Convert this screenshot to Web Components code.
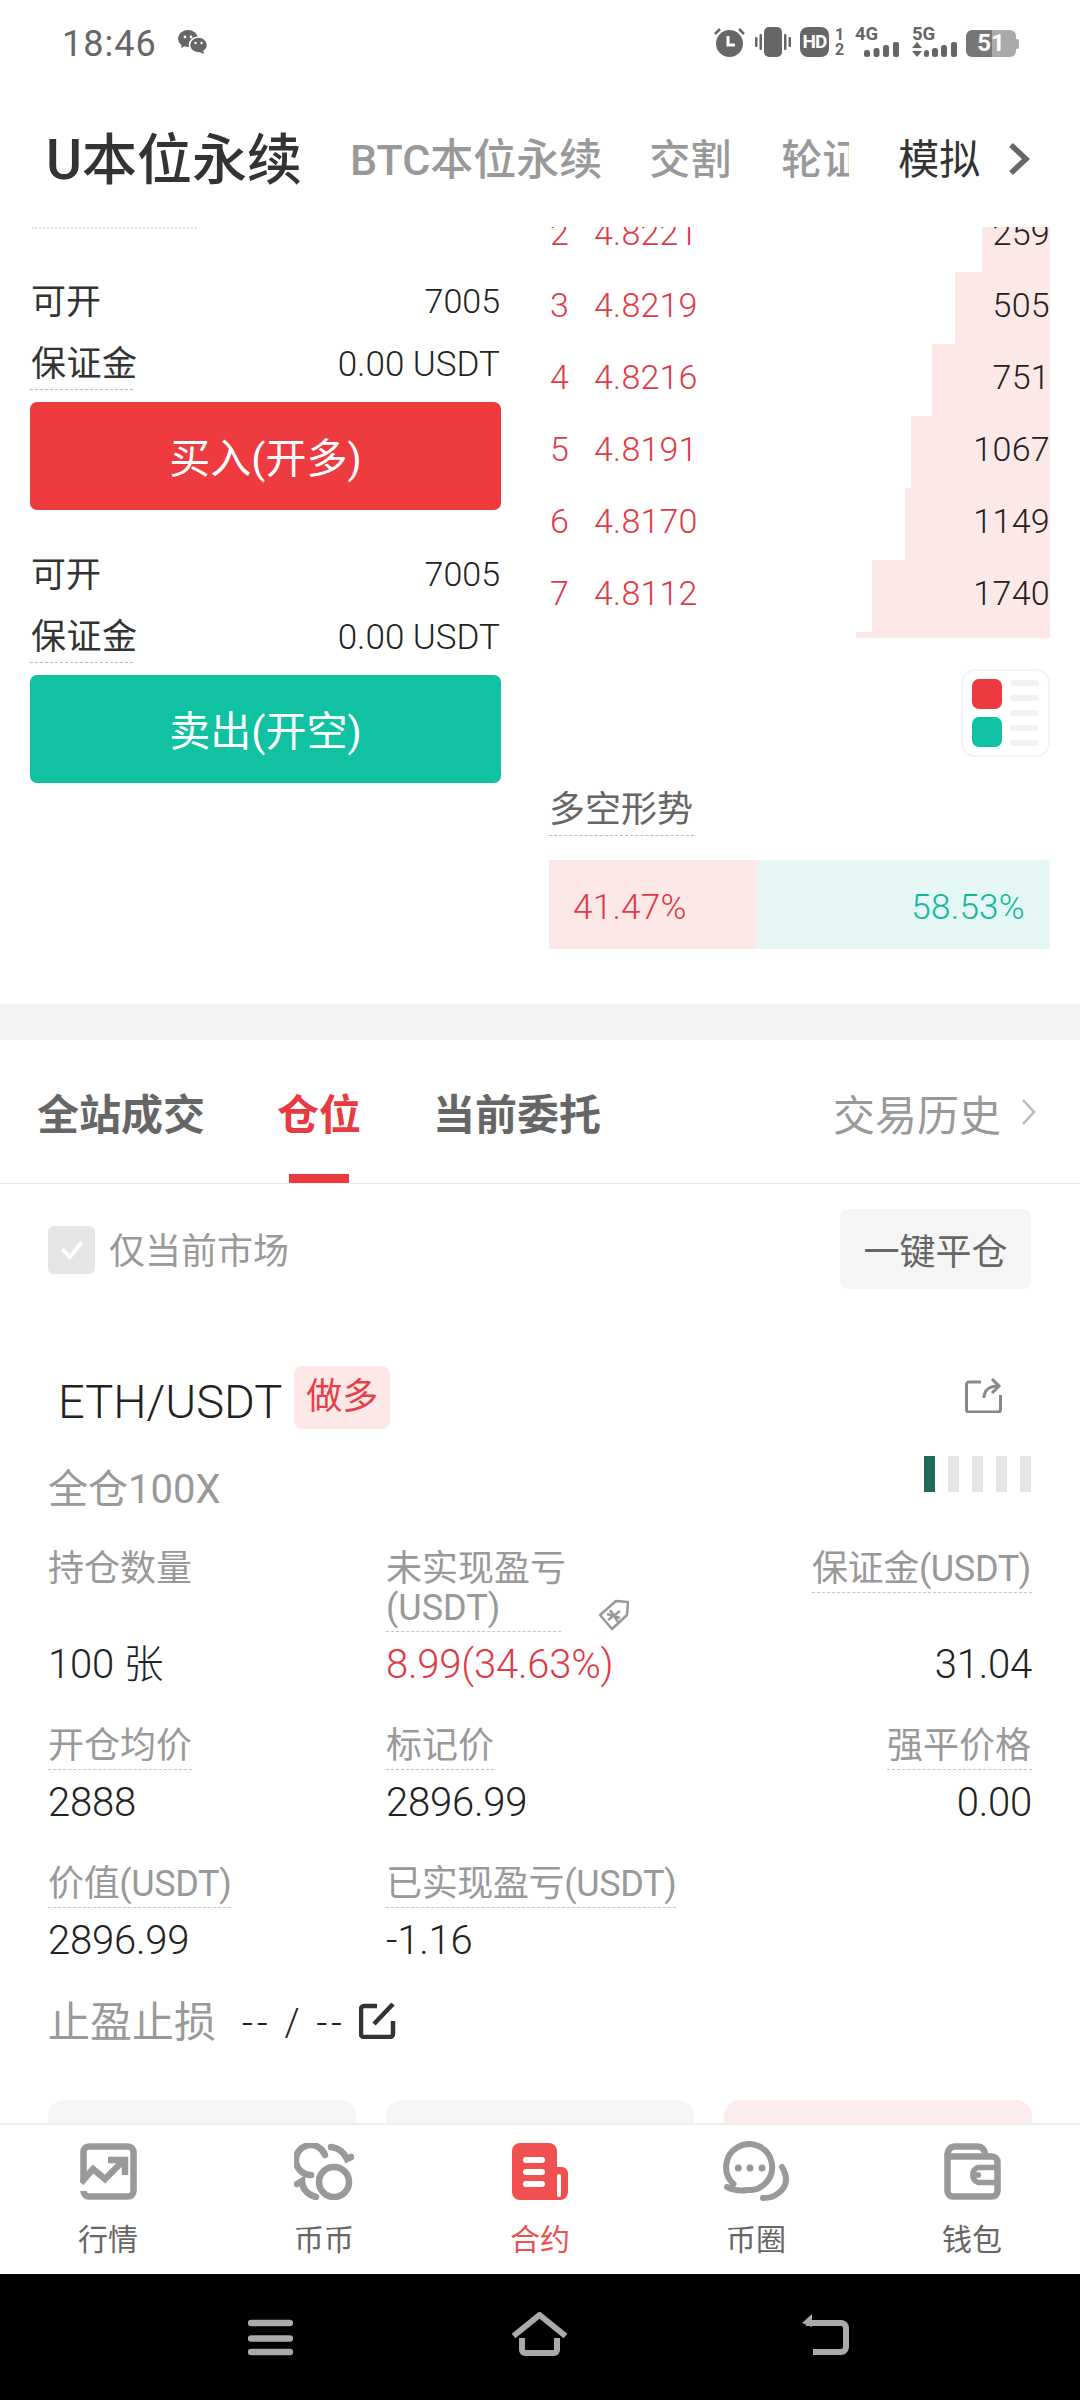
<!DOCTYPE html>
<html lang="zh-CN"><head><meta charset="utf-8"><title>合约</title>
<style>
html,body{margin:0;padding:0;background:#fff}
body{width:1080px;height:2400px;overflow:hidden;font-family:Roboto,"Noto Sans CJK SC",sans-serif;color:#333;display:flex;flex-direction:column}
</style></head><body>
<status-bar></status-bar>
<market-tabs></market-tabs>
<scroll-view>
  <trade-section>
    <trade-form slot="left" kind="buy" title-text="买入(开多)"></trade-form>
    <trade-form slot="left" kind="sell" title-text="卖出(开空)"></trade-form>
    <order-row slot="right" n="2" p="4.8221" q="259" w="68"></order-row>
    <order-row slot="right" n="3" p="4.8219" q="505" w="95"></order-row>
    <order-row slot="right" n="4" p="4.8216" q="751" w="118"></order-row>
    <order-row slot="right" n="5" p="4.8191" q="1067" w="139"></order-row>
    <order-row slot="right" n="6" p="4.8170" q="1149" w="145"></order-row>
    <order-row slot="right" n="7" p="4.8112" q="1740" w="178"></order-row>
  </trade-section>
  <section-gap></section-gap>
  <position-tabs></position-tabs>
  <filter-row></filter-row>
  <position-head></position-head>
  <stat-grid>
    <stat-cell label="持仓数量" plain>100 张</stat-cell>
    <stat-cell label="未实现盈亏|(USDT)" tag red>8.99(34.63%)</stat-cell>
    <stat-cell label="保证金(USDT)" end>31.04</stat-cell>
    <stat-cell label="开仓均价">2888</stat-cell>
    <stat-cell label="标记价">2896.99</stat-cell>
    <stat-cell label="强平价格" end>0.00</stat-cell>
    <stat-cell label="价值(USDT)">2896.99</stat-cell>
    <stat-cell label="已实现盈亏(USDT)">-1.16</stat-cell>
  </stat-grid>
  <stop-row></stop-row>
  <action-row></action-row>
</scroll-view>
<bottom-nav></bottom-nav>
<system-nav></system-nav>
<script>
const def=(name,html)=>customElements.define(name,class extends HTMLElement{constructor(){super();this.attachShadow({mode:'open'}).innerHTML=html}});

def('status-bar',`<style>
:host{display:flex;flex:none;height:84px;box-sizing:border-box;padding:0 60px 0 62px;align-items:center;color:#666}
.t{font-size:36px;letter-spacing:1px;line-height:40px;margin-top:4px}
.w{margin-left:21px;margin-top:0}
.r{margin-left:auto;display:flex;align-items:flex-start;margin-top:0;font-weight:700;height:30px}
svg{display:block}
.hd{width:29px;height:30px;border-radius:8px;background:#666;color:#fff;font-size:19px;line-height:30px;text-align:center;letter-spacing:-1px;margin-left:9px}
.d{display:flex;flex-direction:column;width:9px;margin-left:6px;font-size:16px;line-height:15px;text-align:center}
.net{display:flex;flex-direction:column;height:30px;margin-left:11px;width:44px;font-size:18.500px;line-height:14px}
.net svg{margin-top:1px}
.bat{margin-left:9px;width:54px;height:27px;margin-top:3px;display:flex;align-items:center}
.body{width:50px;height:27px;border-radius:6px;background:linear-gradient(90deg,#777 26px,#aaa 26px);color:#fff;font-size:24px;line-height:27px;text-align:center}
.nub{width:3px;height:10px;background:#aaa;border-radius:0 2px 2px 0}
</style>
<span class="t">18:46</span>
<svg class="w" width="30" height="24" viewBox="0 0 30 24" fill="#666"><ellipse cx="10" cy="8.500" rx="10" ry="8.500"/><path d="M4 13l-1 5 6-3z"/><ellipse cx="20.500" cy="15" rx="9" ry="8" stroke="#fff" stroke-width="1.500"/><path d="M25 20l1 4-5-2z"/><circle cx="7" cy="7" r="1.400" fill="#fff"/><circle cx="13" cy="7" r="1.400" fill="#fff"/><circle cx="17.500" cy="13" r="1.200" fill="#fff"/><circle cx="23.500" cy="13" r="1.200" fill="#fff"/></svg>
<div class="r">
<svg width="31" height="30" viewBox="0 0 31 30"><circle cx="15.500" cy="16.500" r="13.500" fill="#666"/><path d="M14 9v9h7" fill="none" stroke="#fff" stroke-width="3"/><path d="M1 7l5-5M30 7l-5-5" stroke="#666" stroke-width="2.500"/></svg>
<svg style="margin-left:10px" width="36" height="30" viewBox="0 0 36 30" fill="#666"><rect x="9" width="18" height="30" rx="5"/><rect y="10" width="2.500" height="10" rx="1"/><rect x="4.500" y="7" width="2.500" height="16" rx="1"/><rect x="29" y="7" width="2.500" height="16" rx="1"/><rect x="33.500" y="10" width="2.500" height="10" rx="1"/></svg>
<span class="hd">HD</span><span class="d"><span>1</span><span>2</span></span>
<span class="net">4G<svg width="35" height="15" viewBox="0 0 35 15" style="margin-left:9px" fill="#666"><rect y="8" width="6" height="7" rx="2.500"/><rect x="9.500" y="6" width="6" height="9" rx="2.500"/><rect x="19" y="3" width="6" height="12" rx="2.500"/><rect x="29" width="6" height="15" rx="2"/></svg></span>
<span class="net" style="margin-left:13px;width:45px">5G<svg width="45" height="15" viewBox="0 0 45 15" fill="#666"><path d="M5 0l5 6H0zM5 15l5-6H0z"/><rect x="12" y="8" width="5" height="7" rx="2.500"/><rect x="20" y="6" width="6" height="9" rx="2.500"/><rect x="29" y="3" width="6" height="12" rx="2.500"/><rect x="39" width="6" height="15" rx="2"/></svg></span>
<span class="bat"><span class="body">51</span><span class="nub"></span></span>
</div>`);

def('market-tabs',`<style>
:host{display:flex;flex:none;height:143px;box-sizing:border-box;align-items:center;padding:8px 0 0 46px;white-space:nowrap;color:#999}
.a{font-size:55px;font-weight:500;color:#333;margin-right:48px;line-height:60px}
.g{font-size:43px;font-weight:500;line-height:60px}
.k{margin-left:47px;font-size:41px}
.clip{width:68px;overflow:hidden;margin-left:50px;font-size:41px}
.d{font-size:41px;color:#333;margin-left:49px;line-height:60px}
svg{margin-left:28px;margin-top:-2px}
</style>
<span class="a">U本位永续</span><span class="g">BTC本位永续</span><span class="g k">交割</span><span class="g clip">轮证</span><span class="d">模拟</span>
<svg width="22" height="32" viewBox="0 0 22 32" fill="none" stroke="#666" stroke-width="5.500"><path d="M3 2l15 14L3 30"/></svg>`);

def('scroll-view',`<style>:host{display:block;flex:1;min-height:0;overflow:hidden}</style><slot></slot>`);

def('trade-section',`<style>
:host{display:grid;grid-template-columns:471px 501px;column-gap:48px;box-sizing:border-box;height:777px;padding-left:30px;overflow:hidden}
.frag{height:3px;width:165px;border-top:2px dotted #e4e4e4;margin-left:2px;margin-bottom:45px}
.r{margin-top:-27px}
.stub{height:6px;background:linear-gradient(to left,#fde8e8 194px,transparent 194px)}
.sw{margin:31px 0 0 auto;width:89px;height:88px;box-sizing:border-box;border:2px solid #f4f4f4;border-radius:14px;padding:8px 9px;display:grid;grid-template-columns:30px 29px;column-gap:8px;align-content:space-between}
.bl{display:flex;flex-direction:column;justify-content:space-between;height:68px}
.bl i{display:block;height:30px;border-radius:7px}
.ln{display:flex;flex-direction:column;justify-content:space-between;height:66px;margin-top:1px}
.ln i{display:block;height:6px;border-radius:3px;background:#f2f2f2}
.h{display:inline-block;margin-top:27px;font-size:36px;line-height:52px;height:51px;color:#666;border-bottom:1px dashed #bbb;padding:0 1px 0 0}
.bar{display:flex;justify-content:space-between;align-items:center;height:89px;margin-top:24px;font-size:35px;font-weight:300;line-height:95px}
.bar span{box-sizing:border-box;height:89px}
.x{width:208px;background:#fde8e8;color:#e03a44;padding-left:24px;letter-spacing:.3px}
.y{flex:1;background:#e5f7f4;color:#10b89a;padding-right:25px;text-align:right;letter-spacing:.3px}
</style>
<div class="l"><div class="frag"></div><slot name="left"></slot></div>
<div class="r"><slot name="right"></slot><div class="stub"></div>
<div class="sw"><div class="bl"><i style="background:#ee3b40"></i><i style="background:#10c2a2"></i></div><div class="ln"><i></i><i></i><i></i><i></i><i></i></div></div>
<div class="h">多空形势</div>
<div class="bar"><span class="x">41.47%</span><span class="y">58.53%</span></div></div>`);

customElements.define('trade-form',class extends HTMLElement{constructor(){super();
const buy=this.getAttribute('kind')==='buy';
this.attachShadow({mode:'open'}).innerHTML=`<style>
:host{display:block;margin-top:${buy?'0':'40px'}}
.row{display:flex;justify-content:space-between;align-items:center;font-size:35px}
.a{height:48px}
.a .c{margin:0 0 6px 1px}
.b{height:53px;margin-top:12px;align-items:flex-start}
.b span{line-height:56px}
.u{border-bottom:1px dashed #bbb;width:103px;white-space:nowrap;height:52px;letter-spacing:.5px;text-indent:1px}
.n{margin-right:1px;font-weight:300;color:#222}
.s{font-size:34px}
button{display:block;width:471px;height:108px;margin-top:12px;border:0;padding:6px 0 0;border-radius:7px;background:${buy?'#ee3b40':'#10c2a2'};color:#fff;font:inherit;font-size:41px;line-height:100px}
</style>
<div class="row a"><span class="c">可开</span><span class="n s">7005</span></div>
<div class="row b"><span class="u">保证金</span><span class="n">0.00 USDT</span></div>
<button>${this.getAttribute('title-text')}</button>`}});

customElements.define('order-row',class extends HTMLElement{constructor(){super();
const g=n=>this.getAttribute(n);
this.attachShadow({mode:'open'}).innerHTML=`<style>
:host{display:flex;height:72px;box-sizing:border-box;padding:0 0 6px 1px;align-items:center;font-size:34px;font-weight:300;background:linear-gradient(to left,#fde8e8 ${g('w')}px,transparent ${g('w')}px)}
.n{width:44px;color:#e03a44}.p{flex:1;color:#e03a44;letter-spacing:.2px}.q{color:#222;letter-spacing:.3px}
</style><span class="n">${g('n')}</span><span class="p">${g('p')}</span><span class="q">${g('q')}</span>`}});

def('section-gap',`<style>:host{display:block;height:36px;background:#f2f3f5}</style>`);

def('position-tabs',`<style>
:host{display:flex;height:144px;box-sizing:border-box;border-bottom:1px solid #e6e6e6;padding:0 44px 0 37px;white-space:nowrap}
.t{display:flex;flex-direction:column;align-items:center;margin-right:72px;font-size:42px;font-weight:700;color:#666;padding-top:43px;line-height:66px;height:143px;box-sizing:border-box}
.on{color:#e83a40}
.on i{display:block;width:60px;height:9px;background:#e83a40;margin-top:25px}
.h{margin-left:auto;display:flex;align-items:center;height:66px;margin-top:39px;font-size:42px;color:#999}
svg{margin-left:20px}
</style>
<span class="t">全站成交</span><span class="t on">仓位<i></i></span><span class="t">当前委托</span>
<span class="h">交易历史<svg width="15" height="26" viewBox="0 0 15 26" fill="none" stroke="#bbb" stroke-width="2.500"><path d="M2 1l11 12L2 25"/></svg></span>`);

def('filter-row',`<style>
:host{display:flex;align-items:center;height:80px;margin-top:25px;padding:0 49px 0 48px;font-size:36px;color:#999}
.c{width:47px;height:48px;border-radius:6px;background:#e5e5e5;display:flex;align-items:center;justify-content:center;margin-right:14px;margin-top:2px}
.l{margin-top:-2px}
button{margin-left:auto;width:191px;height:80px;border:0;border-radius:8px;background:#f5f5f5;color:#666;font:inherit;font-size:36px;padding:0}
</style>
<span class="c"><svg width="24" height="20" viewBox="0 0 24 20" fill="none" stroke="#fff" stroke-width="4"><path d="M2 9l8 8L22 2"/></svg></span><span class="l">仅当前市场</span><button>一键平仓</button>`);

def('position-head',`<style>
:host{display:block;margin-top:77px}
.a{display:flex;align-items:center;height:63px;padding:0 78px 0 58px}
.s{font-size:47px;font-weight:300;color:#222;line-height:63px;margin-top:7px;margin-right:12px}
.b{width:96px;height:63px;border-radius:8px;background:#fde8e8;color:#e5404a;font-size:36px;line-height:63px;text-align:center}
svg{display:block}
.e{margin-left:auto;margin-top:-5px}
.c{display:flex;justify-content:space-between;align-items:flex-start;height:66px;margin-top:27px;padding:0 49px 0 48px}
.k{font-size:40px;line-height:68px;color:#999}
.r{display:flex;gap:13px}
.r i{display:block;width:11px;height:36px;background:#e5e5e5}
.r i:first-child{background:#1e6b5a}
</style>
<div class="a"><span class="s">ETH/USDT</span><span class="b">做多</span>
<svg class="e" width="37" height="36" viewBox="0 0 37 36" fill="none" stroke="#888" stroke-width="3"><path d="M16 5H4a2.500 2.500 0 0 0-2.500 2.500v25A2.500 2.500 0 0 0 4 35h29a2.500 2.500 0 0 0 2.500-2.500V18"/><path d="M19 21c0-8 6-12 14-12"/><path d="M27 2l7 7-7 7"/></svg></div>
<div class="c"><span class="k">全仓100X</span><span class="r"><i></i><i></i><i></i><i></i><i></i></span></div>`);

def('stat-grid',`<style>:host{display:grid;grid-template-columns:repeat(3,308px);column-gap:30px;row-gap:36px;padding:25px 49px 0 48px}</style><slot></slot>`);

customElements.define('stat-cell',class extends HTMLElement{constructor(){super();
const h=n=>this.hasAttribute(n);
const raw=this.getAttribute('label');
const lab=raw.split('|').join('<br>');
const tight=raw.includes('(USDT)')&&!raw.includes('|');
this.attachShadow({mode:'open'}).innerHTML=`<style>
:host{display:flex;flex-direction:column;align-items:${h('end')?'flex-end':'flex-start'}}
.w{display:flex;align-items:flex-end;min-height:46px}
.l{font-size:36px;line-height:39px;color:#999;padding:3px ${h('end')?'1px':'0'} 3px 0;white-space:nowrap;letter-spacing:${tight?'-.35px':'0'};${h('tag')?'width:175px;':''}border-bottom:1px dashed ${h('plain')?'transparent':'#c4c4c4'}}
.v{font-size:40px;font-weight:300;line-height:46px;margin-top:10px;color:${h('red')?'#e03a44':'#222'};letter-spacing:-.2px}
svg{margin:0 0 1px 36px;display:block;flex:none}
.sp{flex:1}
</style>
<div class="w"><span class="l">${lab}</span>${h('tag')?`<svg width="33" height="32" viewBox="0 0 33 32" fill="none" stroke="#999" stroke-width="2.500" stroke-linejoin="round"><path d="M3 16L19 2l12 1-1 13-15 14z"/><path d="M11 21l12-9M13 11l8 12M10 15l13 4" stroke-width="2.500"/></svg>`:''}</div>
${h('plain')||h('tag')||raw.startsWith('保证金')?'<span class="sp"></span>':''}
<span class="v"><slot></slot></span>`}});

def('stop-row',`<style>
:host{display:flex;align-items:center;height:60px;margin-top:29px;padding-left:48px}
.a{font-size:42px;color:#999;line-height:64px}
.b{font-size:38px;font-weight:300;letter-spacing:3.800px;color:#222;margin-left:26px;line-height:64px}
svg{margin-left:13px;margin-top:-5px}
</style>
<span class="a">止盈止损</span><span class="b">-- / --</span>
<svg width="37" height="36" viewBox="0 0 37 36" fill="none" stroke="#333" stroke-width="4.500"><path d="M18 3H5a3 3 0 0 0-3 3v25a3 3 0 0 0 3 3h26a3 3 0 0 0 3-3V18"/><path d="M15 21L34 1"/></svg>`);

def('action-row',`<style>
:host{display:grid;grid-template-columns:repeat(3,308px);column-gap:30px;margin-top:47px;padding:0 49px 0 48px}
i{display:block;height:80px;border-radius:16px;background:#f5f5f5}
i:last-child{background:#fdecec}
</style><i></i><i></i><i></i>`);

customElements.define('nav-item',class extends HTMLElement{constructor(){super();
this.attachShadow({mode:'open'}).innerHTML=`<style>
:host{display:flex;flex-direction:column;align-items:center;width:216px;font-size:30px;color:${this.hasAttribute('on')?'#ee5050':'#666'}}
.i{height:66px;display:flex;align-items:flex-end;justify-content:center;margin-top:9px}
.l{line-height:40px;margin-top:20px}
::slotted(svg){display:block}
</style><div class="i"><slot name="icon"></slot></div><span class="l"><slot></slot></span>`}});

def('bottom-nav',`<style>
:host{display:flex;flex:none;height:151px;box-sizing:border-box;border-top:2px solid #eee;background:#fff}
svg{display:block}
.g{fill:none;stroke:#999;stroke-width:6.500;stroke-linecap:round}
</style>
<nav-item>行情<svg slot="icon" class="g" width="57" height="57" viewBox="0 0 57 57"><path d="M3.500 38V9a5.500 5.500 0 0 1 5.500-5.500h39A5.500 5.500 0 0 1 53.500 9v39a5.500 5.500 0 0 1-5.500 5.500H9A5.500 5.500 0 0 1 3.500 48" stroke-linecap="butt"/><path d="M1 40l12-14 12 10 19-19" stroke-linecap="butt"/><path d="M28 17h17v15" stroke-linecap="butt"/></svg></nav-item>
<nav-item>币币<svg slot="icon" class="g" width="60" height="57" viewBox="0 0 60 57"><circle cx="40" cy="39" r="15"/><path d="M31 12A15 15 0 1 0 17 32"/><path d="M37 4C45 5 50 9 53 16l4-2"/><path d="M3 41l5-3C8 46 14 52 22 54"/></svg></nav-item>
<nav-item on>合约<svg slot="icon" width="56" height="57" viewBox="0 0 56 57"><path fill="#f05050" d="M8 0h29a8 8 0 0 1 8 8v16h5a6 6 0 0 1 6 6v19a8 8 0 0 1-8 8H8a8 8 0 0 1-8-8V8a8 8 0 0 1 8-8z"/><rect x="11" y="14" width="22" height="6" rx="3" fill="#fff"/><rect x="11" y="26" width="22" height="6" rx="3" fill="#fff"/><rect x="11" y="38" width="22" height="6" rx="3" fill="#fff"/><rect x="45" y="31" width="4" height="23" rx="2" fill="#fff"/></svg></nav-item>
<nav-item>币圈<svg slot="icon" class="g" width="67" height="60" viewBox="0 0 67 60" style="margin-bottom:-1px"><path d="M10.500 43A23 23 0 1 1 24 49C18 50 10 49 4 46" stroke-width="6"/><circle cx="15.300" cy="27" r="3.500" fill="#999" stroke="none"/><circle cx="27" cy="27" r="3.500" fill="#999" stroke="none"/><circle cx="39" cy="27" r="3.500" fill="#999" stroke="none"/><path d="M59 26C65 36 65 46 54 53C50 57 44 57 40 57" stroke-width="6"/></svg></nav-item>
<nav-item>钱包<svg slot="icon" class="g" width="57" height="57" viewBox="0 0 57 57"><path d="M3.500 11V48a5.500 5.500 0 0 0 5.500 5.500h39a5.500 5.500 0 0 0 5.500-5.500V19a5.500 5.500 0 0 0-5.500-5.500H4" stroke-linecap="butt"/><path d="M3.500 13C3.500 6 7 3.500 11 3.500H33C38 3.500 41 7 41 12" stroke-linecap="butt"/><path d="M51 24.500H34a8 8 0 0 0 0 15H51" stroke-width="5.500" stroke-linecap="butt"/><circle cx="34" cy="32" r="3" fill="#999" stroke="none"/></svg></nav-item>`);

def('system-nav',`<style>
:host{display:flex;flex:none;height:126px;background:#000;box-sizing:border-box;padding:38px 0 0 248px;align-items:flex-start}
svg{display:block;fill:none;stroke:#aaa;stroke-width:6}
</style>
<svg width="45" height="45" viewBox="0 0 45 45" style="margin-top:7px;stroke-width:6.500" stroke-linecap="round"><path d="M3 4h39M3 19.500h39M3 33h39" /></svg>
<svg width="57" height="44" viewBox="0 0 57 44" style="margin-left:218px"><path d="M2.500 24L28.500 3l26 21" stroke-linejoin="round"/><path d="M11 26v12a3 3 0 0 0 3 3h29a3 3 0 0 0 3-3V26"/></svg>
<svg width="48" height="42" viewBox="0 0 48 42" style="margin-left:233px;margin-top:1px"><path d="M5 10h35a5 5 0 0 1 5 5v19a5 5 0 0 1-5 5H12"/><path d="M1 10L11 1v13z" fill="#aaa" stroke="none"/></svg>`);
</script>
</body></html>
